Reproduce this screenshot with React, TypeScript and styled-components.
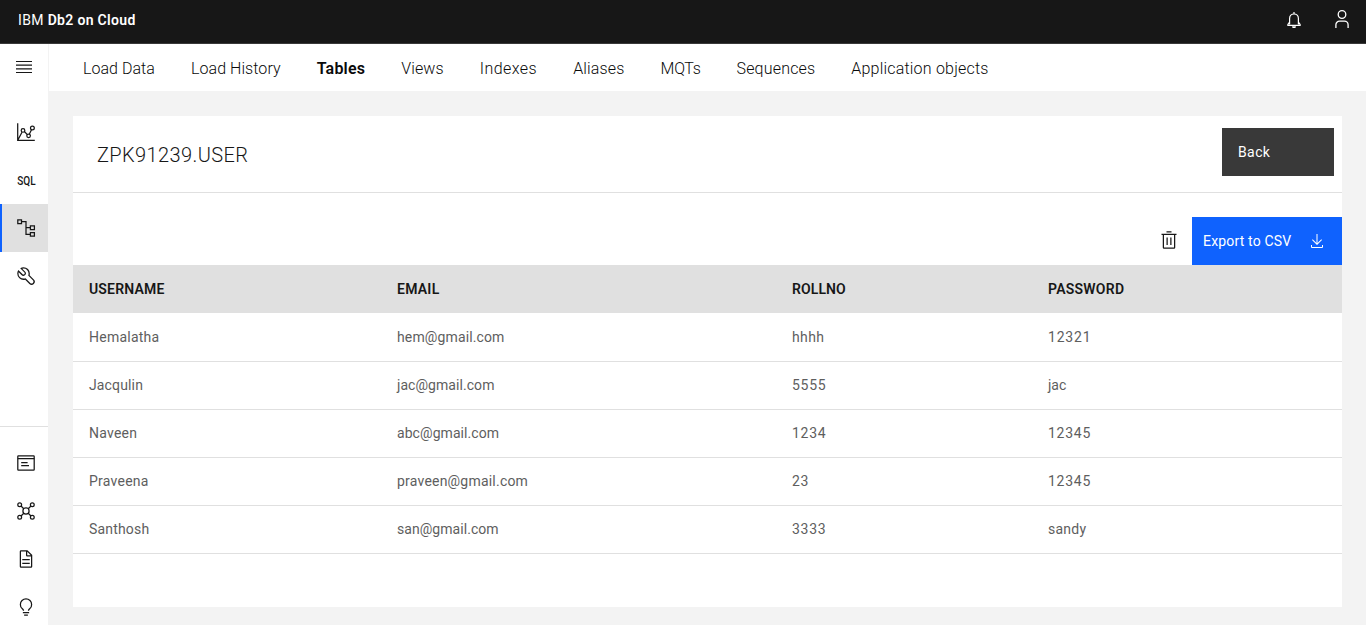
import React from "react";
import styled, { createGlobalStyle } from "styled-components";

const GlobalStyle = createGlobalStyle`
  *, *::before, *::after { box-sizing: border-box; }
  html, body { margin: 0; height: 100%; overflow: hidden; }
  body {
    background: #f3f3f3;
    color: #171717;
    font-family: Roboto, "Liberation Sans", sans-serif;
    font-size: 14px;
  }
  svg { display: block; flex: none; }
`;

const Page = styled.div`
  display: flex;
  flex-direction: column;
  height: 100vh;
  overflow: hidden;
`;

const TopBar = styled.header`
  display: flex;
  align-items: center;
  justify-content: space-between;
  flex: none;
  height: 44px;
  padding: 0 0 3px 18px;
  background: #171717;
  border-bottom: 1px solid #393939;
  color: #fff;
`;

const Brand = styled.div`
  white-space: pre;
  line-height: 20px;
  letter-spacing: 0.35px;
`;

const BrandName = styled.strong`
  font-weight: 600;
  letter-spacing: 0.32px;
`;

const TopActions = styled.div`
  display: flex;
`;

const TopAction = styled.div`
  display: flex;
  align-items: center;
  justify-content: center;
  width: 48px;
  height: 40px;
`;

const Body = styled.div`
  display: flex;
  flex: 1;
  min-height: 0;
`;

const Sidebar = styled.aside`
  display: flex;
  flex-direction: column;
  flex: none;
  width: 48px;
  background: #fff;
  overflow: hidden;
`;

const MenuButton = styled.div`
  display: flex;
  align-items: center;
  justify-content: center;
  flex: none;
  height: 46px;
  margin-bottom: 18px;
`;

const SideItem = styled.div<{ $active?: boolean }>`
  display: flex;
  align-items: center;
  justify-content: center;
  flex: none;
  height: 48px;
  padding-left: ${(p) => (p.$active ? "2px" : "4px")};
  background: ${(p) => (p.$active ? "#e0e0e0" : "transparent")};
  border-left: ${(p) => (p.$active ? "2px solid #0f62fe" : "none")};
`;

const SideFooter = styled.div`
  flex: none;
  margin-top: 126px;
  padding-top: 12px;
  border-top: 1px solid #e0e0e0;
`;

const SqlMark = styled.span`
  margin: 1px -4px 0;
  font-size: 12.5px;
  font-weight: 500;
  line-height: 14px;
  transform: scaleX(0.8);
`;

const Main = styled.main`
  display: flex;
  flex-direction: column;
  flex: 1;
  min-width: 0;
`;

const Tabs = styled.nav`
  display: flex;
  flex: none;
  gap: 36px;
  height: 47px;
  padding: 15px 0 0 34px;
  background: #fff;
  border-left: 1px solid #f3f3f3;
`;

const Tab = styled.a<{ $active?: boolean; $track: number }>`
  color: #0a0a0a;
  font-size: 16px;
  font-weight: ${(p) => (p.$active ? 600 : 300)};
  line-height: 20px;
  letter-spacing: ${(p) => p.$track}px;
  white-space: nowrap;
`;

const Panel = styled.section`
  flex: none;
  height: 491px;
  margin: 25px 24px 0 25px;
  background: #fff;
`;

const PanelHeader = styled.div`
  display: flex;
  align-items: center;
  justify-content: space-between;
  height: 77px;
  padding: 0 8px 4px 24px;
  border-bottom: 1px solid #e0e0e0;
`;

const Title = styled.h1`
  margin: 5px 0 0;
  font-size: 20px;
  font-weight: 300;
  line-height: 24px;
  letter-spacing: 0.4px;
`;

const BackButton = styled.button`
  width: 112px;
  height: 48px;
  padding: 0 16px;
  border: 0;
  background: #393939;
  color: #fff;
  font: inherit;
  letter-spacing: 0.4px;
  text-align: left;
`;

const Toolbar = styled.div`
  display: flex;
  align-items: flex-end;
  justify-content: flex-end;
  height: 72px;
`;

const IconButton = styled.div`
  display: flex;
  align-items: center;
  justify-content: center;
  width: 46px;
  height: 48px;
  padding-bottom: 2px;
`;

const ExportButton = styled.button`
  display: flex;
  align-items: center;
  justify-content: space-between;
  width: 150px;
  height: 48px;
  padding: 0 17px 0 11px;
  border: 0;
  background: #0f62fe;
  color: #fff;
  font: inherit;
  letter-spacing: 0.17px;
`;

const Table = styled.table`
  width: 100%;
  table-layout: fixed;
  border-spacing: 0;
  border-bottom: 1px solid #e0e0e0;
`;

const HeadCell = styled.th<{ $width?: number; $track: number }>`
  width: ${(p) => (p.$width ? `${p.$width}px` : "auto")};
  height: 48px;
  padding: 0 16px;
  background: #e0e0e0;
  font-weight: 600;
  letter-spacing: ${(p) => p.$track}px;
  text-align: left;
`;

const Row = styled.tr`
  & + & > td {
    padding-bottom: 1px;
    border-top: 1px solid #e0e0e0;
  }
`;

const Cell = styled.td<{ $track: number }>`
  height: 48px;
  padding: 0 16px;
  color: #5e5e5e;
  letter-spacing: ${(p) => p.$track}px;
`;

const Solid = ({ d, size = 20 }: { d: string; size?: number }) => (
  <svg width={size} height={size} viewBox="0 0 32 32" fill="currentColor">
    <path d={d} />
  </svg>
);

const Line = ({ children, width = 1.25 }: { children: React.ReactNode; width?: number }) => (
  <svg width="20" height="20" viewBox="0 0 20 20" fill="none" stroke="currentColor" strokeWidth={width}>
    {children}
  </svg>
);

const BellIcon = () => (
  <Line width={1.2}>
    <path d="M10 2v1.6M5.6 14.6V8.4a4.4 4.4 0 0 1 8.8 0v6.2" />
    <path d="M5.6 12 3.9 14.4v.9h12.2v-.9L14.4 12" />
    <path d="M9 16v1.3h2V16" />
  </Line>
);

const UserIcon = () => (
  <Line width={1.3}>
    <circle cx="10" cy="4.5" r="3.8" />
    <path d="M3.9 18v-3.2a3.6 3.6 0 0 1 3.6-3.6h5a3.6 3.6 0 0 1 3.6 3.6V18" />
  </Line>
);

const MenuIcon = () => (
  <svg width="16" height="12" viewBox="0 0 16 12" fill="currentColor">
    <path d="M0 0h16v1.1H0zM0 3.6h16v1.2H0zM0 7.2h16v1.2H0zM0 10.9h16V12H0z" />
  </svg>
);

const ChartIcon = () => (
  <Line>
    <path d="M1.7 1.2v17.1h17.1M2 17.8l4-7.6M8.4 9.5l2.9 3.1M13.4 12.1l2.1-4.3" />
    <circle cx="7" cy="8.4" r="1.8" />
    <circle cx="12.6" cy="13.8" r="1.8" />
    <circle cx="16.4" cy="6" r="1.9" />
  </Line>
);

const TreeIcon = () => (
  <Line>
    <path d="M1.8 1.9h3.7v3.7H1.8zM14.4 7.9h4v3.7h-4zM14.4 14.5h4v3.7h-4z" />
    <path d="M5.5 3.7H10v12.6h4.4M10 9.7h4.4" />
  </Line>
);

const WindowIcon = () => (
  <Line>
    <rect x="1.8" y="2.8" width="16.4" height="14.2" rx="0.6" />
    <path d="M1.8 5.7h16.4M5.2 9.5h6.4M5.2 12.6h7.8" />
  </Line>
);

const NetworkIcon = () => (
  <Line>
    <circle cx="10" cy="10" r="3.1" />
    <circle cx="3.7" cy="3.7" r="1.9" />
    <circle cx="16.3" cy="3.7" r="1.9" />
    <circle cx="3.7" cy="16.3" r="1.9" />
    <circle cx="16.3" cy="16.3" r="1.9" />
    <path d="m5 5 2.8 2.8M15 5l-2.8 2.8M5 15l2.8-2.8M15 15l-2.8-2.8" />
  </Line>
);

const TRASH =
  "M12 12h2v12h-2zM18 12h2v12h-2zM4 6v2h2v20a2 2 0 0 0 2 2h16a2 2 0 0 0 2-2V8h2V6zM8 28V8h16v20zM12 2h8v2h-8z";
const DOWNLOAD =
  "M26 24v4H6v-4H4v4a2 2 0 0 0 2 2h20a2 2 0 0 0 2-2v-4zM26 14l-1.41-1.41L17 20.17V2h-2v18.17l-7.59-7.58L6 14l10 10z";
const WRENCH =
  "M12.1 2a9.8 9.8 0 0 0-5.4 1.6l6.4 6.4a2.1 2.1 0 0 1 .2 3 2.1 2.1 0 0 1-3-.2L3.7 6.4A9.84 9.84 0 0 0 2 12.1a10.14 10.14 0 0 0 10.1 10.1 10.9 10.9 0 0 0 2.6-.3l6.7 6.7a5 5 0 0 0 7.1-7.1l-6.7-6.7a10.9 10.9 0 0 0 .3-2.6A10 10 0 0 0 12.1 2zm8 10.1a7.61 7.61 0 0 1-.3 2.1l-.3 1.1.8.8 6.7 6.7a2.88 2.88 0 0 1 .9 2.1A2.72 2.72 0 0 1 27 27a2.9 2.9 0 0 1-4.2 0l-6.7-6.7-.8-.8-1.1.3a7.61 7.61 0 0 1-2.1.3 8.27 8.27 0 0 1-5.7-2.3A7.63 7.63 0 0 1 4 12.1a8.33 8.33 0 0 1 .3-2.2l4.4 4.4a4.14 4.14 0 0 0 5.9.2 4.14 4.14 0 0 0-.2-5.9L10 4.2a6.45 6.45 0 0 1 2-.3 8.27 8.27 0 0 1 5.7 2.3 8.49 8.49 0 0 1 2.4 5.9z";
const DOCUMENT =
  "M25.7 9.3l-7-7A1 1 0 0 0 18 2H8a2 2 0 0 0-2 2v24a2 2 0 0 0 2 2h16a2 2 0 0 0 2-2V10a1 1 0 0 0-.3-.7zM18 4.4l5.6 5.6H18zM24 28H8V4h8v6a2 2 0 0 0 2 2h6zM10 22h12v2H10zM10 16h12v2H10z";
const BULB =
  "M11 24h10v2H11zM13 28h6v2h-6zM16 2A10 10 0 0 0 6 12a9.19 9.19 0 0 0 3.46 7.62C10.47 20.54 11 21.07 11 22h2c0-1.84-1.11-2.87-2.19-3.86A7.2 7.2 0 0 1 8 12a8 8 0 0 1 16 0 7.2 7.2 0 0 1-2.82 6.14C20.11 19.14 19 20.16 19 22h2c0-.93.53-1.46 1.54-2.39A9.18 9.18 0 0 0 26 12 10 10 0 0 0 16 2z";

type Text = [text: string, track: number];

const tabs: Text[] = [
  ["Load Data", 0.04],
  ["Load History", 0.07],
  ["Tables", 0.2],
  ["Views", 0.12],
  ["Indexes", 0.45],
  ["Aliases", 0.17],
  ["MQTs", -0.3],
  ["Sequences", 0.18],
  ["Application objects", 0.2],
];

const columns: { label: string; track: number; width?: number }[] = [
  { label: "USERNAME", track: 0.18, width: 308 },
  { label: "EMAIL", track: 0.25, width: 395 },
  { label: "ROLLNO", track: 0.1, width: 256 },
  { label: "PASSWORD", track: 0.25 },
];

const rows: Text[][] = [
  [["Hemalatha", 0.24], ["hem@gmail.com", 0.13], ["hhhh", 0.4], ["12321", 0.8]],
  [["Jacqulin", 0.14], ["jac@gmail.com", 0.06], ["5555", 0.7], ["jac", 0]],
  [["Naveen", 0.25], ["abc@gmail.com", 0.07], ["1234", 0.7], ["12345", 0.75]],
  [["Praveena", 0.24], ["praveen@gmail.com", 0.21], ["23", 0.7], ["12345", 0.75]],
  [["Santhosh", 0.18], ["san@gmail.com", 0.05], ["3333", 0.7], ["sandy", 0.25]],
];

export default function App() {
  return (
    <Page>
      <GlobalStyle />
      <TopBar>
        <Brand>
          IBM <BrandName>Db2 on Cloud</BrandName>
        </Brand>
        <TopActions>
          <TopAction><BellIcon /></TopAction>
          <TopAction><UserIcon /></TopAction>
        </TopActions>
      </TopBar>
      <Body>
        <Sidebar>
          <MenuButton><MenuIcon /></MenuButton>
          <SideItem><ChartIcon /></SideItem>
          <SideItem><SqlMark>SQL</SqlMark></SideItem>
          <SideItem $active><TreeIcon /></SideItem>
          <SideItem><Solid d={WRENCH} /></SideItem>
          <SideFooter>
            <SideItem><WindowIcon /></SideItem>
            <SideItem><NetworkIcon /></SideItem>
            <SideItem><Solid d={DOCUMENT} /></SideItem>
            <SideItem><Solid d={BULB} /></SideItem>
          </SideFooter>
        </Sidebar>
        <Main>
          <Tabs>
            {tabs.map(([label, track]) => (
              <Tab key={label} $active={label === "Tables"} $track={track}>{label}</Tab>
            ))}
          </Tabs>
          <Panel>
            <PanelHeader>
              <Title>ZPK91239.USER</Title>
              <BackButton>Back</BackButton>
            </PanelHeader>
            <Toolbar>
              <IconButton><Solid d={TRASH} /></IconButton>
              <ExportButton>
                Export to CSV
                <Solid d={DOWNLOAD} size={16} />
              </ExportButton>
            </Toolbar>
            <Table>
              <thead>
                <tr>
                  {columns.map((c) => (
                    <HeadCell key={c.label} $width={c.width} $track={c.track}>{c.label}</HeadCell>
                  ))}
                </tr>
              </thead>
              <tbody>
                {rows.map((cells) => (
                  <Row key={cells[0][0]}>
                    {cells.map(([text, track], i) => (
                      <Cell key={i} $track={track}>{text}</Cell>
                    ))}
                  </Row>
                ))}
              </tbody>
            </Table>
          </Panel>
        </Main>
      </Body>
    </Page>
  );
}
